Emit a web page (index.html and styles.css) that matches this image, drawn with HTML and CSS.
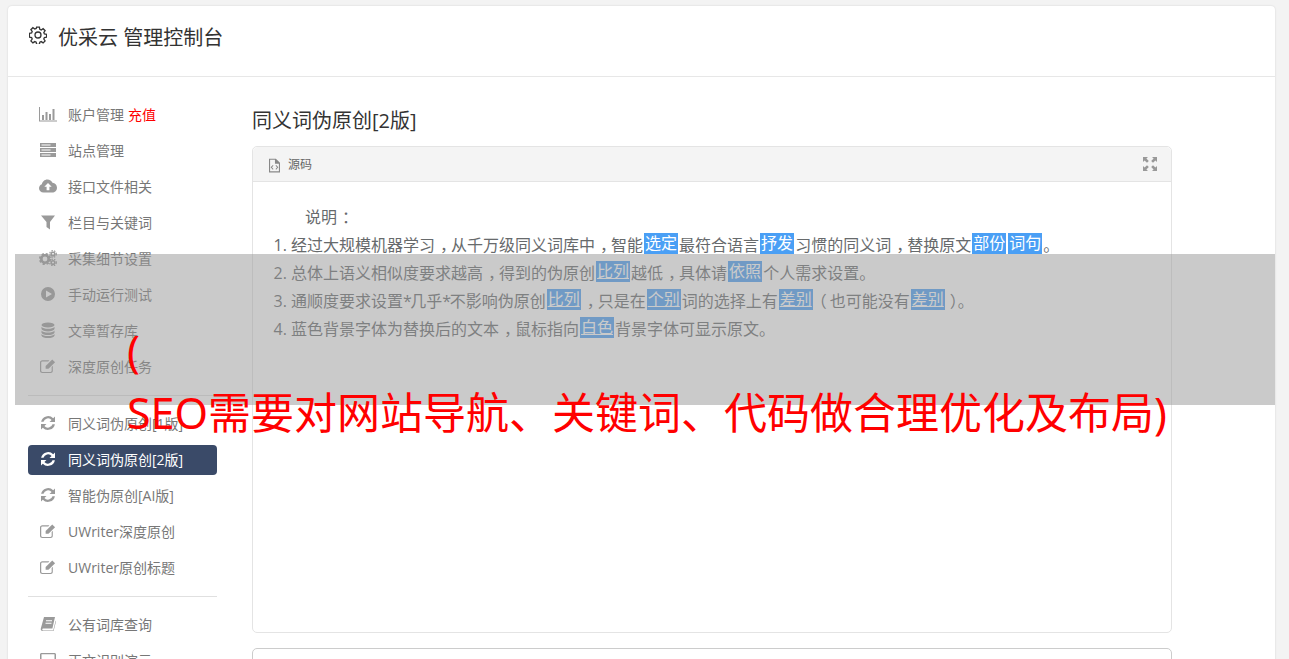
FILE: index.html
```html
<!DOCTYPE html>
<html>
<head>
    <meta charset="utf-8">
    <title>优采云 管理控制台</title>
    <link rel="stylesheet" href="styles.css">
</head>
<body>
    <svg class="icon-defs" width="0" height="0">
        <symbol id="i-chart" viewBox="0 0 18 16"><path d="M0 1h1v13.500h17v1H0z"/><path d="M3 9h2v5H3zM6.500 6h2v8h-2zM10 8h2v6h-2zM13.500 3h2v11h-2z"/></symbol>
        <symbol id="i-server" viewBox="0 0 16 16"><path fill-rule="evenodd" d="M0 1h16v4H0zM0 6h16v4H0zM0 11h16v4H0zM1.500 2.500v1h9v-1zM1.500 7.500v1h9v-1zM1.500 12.500v1h9v-1z"/></symbol>
        <symbol id="i-cloud" viewBox="0 0 18 16"><path fill-rule="evenodd" d="M4.500 14.500C2 14.500 0 12.700 0 10.300 0 8.400 1.200 6.900 2.900 6.300 3.200 3.700 5.500 1.500 8.400 1.500c2.300 0 4.300 1.300 5.100 3.300C16 5 18 7 18 9.700c0 2.700-2.100 4.800-4.800 4.800zM9 5L5.300 8.800h2.300v3.400h2.800V8.800h2.300z"/></symbol>
        <symbol id="i-filter" viewBox="0 0 16 16"><path d="M1 1.500h14L10 8v7.500L6.500 13V8z"/></symbol>
        <symbol id="i-cogs" viewBox="0 0 18 16">
            <circle cx="6" cy="9" r="3.700" fill="none" stroke="currentColor" stroke-width="2.600"/>
            <circle cx="6" cy="9" r="5.200" fill="none" stroke="currentColor" stroke-width="1.800" stroke-dasharray="2.200 1.900"/>
            <circle cx="14" cy="4" r="1.800" fill="none" stroke="currentColor" stroke-width="1.600"/>
            <circle cx="14" cy="4" r="3.300" fill="none" stroke="currentColor" stroke-width="1.200" stroke-dasharray="1.500 1.200"/>
            <circle cx="14" cy="12.500" r="1.800" fill="none" stroke="currentColor" stroke-width="1.600"/>
            <circle cx="14" cy="12.500" r="3.300" fill="none" stroke="currentColor" stroke-width="1.200" stroke-dasharray="1.500 1.200"/>
        </symbol>
        <symbol id="i-play" viewBox="0 0 16 16"><path fill-rule="evenodd" d="M8 1a7 7 0 1 0 0 14A7 7 0 0 0 8 1zM6 4.500l6 3.500-6 3.500z"/></symbol>
        <symbol id="i-database" viewBox="0 0 16 16">
            <ellipse cx="8" cy="3" rx="6.500" ry="2.600"/>
            <path d="M1.500 4.700C2.500 6.200 5 6.800 8 6.800s5.500-.6 6.500-2.100v2.400C14 8.600 11 9.400 8 9.400S2 8.600 1.500 7.100z"/>
            <path d="M1.500 8.400C2.500 9.900 5 10.500 8 10.500s5.500-.6 6.500-2.100v2.400c-.5 1.500-3.500 2.300-6.500 2.300s-6-.8-6.500-2.300z"/>
            <path d="M1.500 12c1 1.500 3.500 2.100 6.500 2.100s5.500-.6 6.500-2.100v1.700C14 15.200 11 16 8 16s-6-.8-6.500-2.300z"/>
        </symbol>
        <symbol id="i-edit" viewBox="0 0 17 16"><path d="M2.500 2H10L8.800 3.200H2.500c-.7 0-1.200.5-1.200 1.200v8.700c0 .7.500 1.200 1.200 1.200h8.700c.7 0 1.200-.5 1.200-1.200V9l1.200-1.200v5.300c0 1.400-1 2.400-2.400 2.400H2.500C1.100 15.500 0 14.500 0 13.100V4.400C0 3 1.100 2 2.500 2z"/><path d="M13 1l3 3-7 7H6V8z"/></symbol>
        <symbol id="i-refresh" viewBox="0 0 16 16"><path d="M15 1.500V7H9.500l2.100-2.100A4.800 4.800 0 0 0 3.500 6.800H1.100A7.100 7.100 0 0 1 13.200 3.300z"/><path d="M1 14.500V9h5.500l-2.100 2.100a4.800 4.800 0 0 0 8.100-1.900h2.400A7.100 7.100 0 0 1 2.800 12.700z"/></symbol>
        <symbol id="i-book" viewBox="0 0 16 16"><path fill-rule="evenodd" d="M4 1h11l-2.600 11.500H3.500c-.8 0-1.200.4-1.200 1s.4 1 1.200 1h9.700L15.700 4.500l.3 1-2.400 9.500H2.500C1.200 15 .5 14 .8 12.500zM6 4.200v1h6v-1zM5.500 6.700v1h6v-1z"/></symbol>
        <symbol id="i-desktop" viewBox="0 0 16 16"><path fill-rule="evenodd" d="M1.500 1h13c.8 0 1.500.7 1.500 1.500v11c0 .8-.7 1.500-1.500 1.500h-13C.7 15 0 14.300 0 13.500v-11C0 1.700.7 1 1.500 1zm0 1.300v11.400h13V2.300z"/></symbol>
        <symbol id="i-file" viewBox="0 0 12 16"><path fill-rule="evenodd" d="M0 .5h7.500L12 5v10.500H0zM1.200 1.700v12.600h9.600V6H6.500V1.700zM4.200 7.500l.7.7-1.700 1.800 1.700 1.800-.7.700L1.800 10zM7.800 7.500l2.400 2.500-2.400 2.500-.7-.7L8.800 10 7.100 8.200z"/></symbol>
        <symbol id="i-expand" viewBox="0 0 14 14"><path d="M0 0h5L3.400 1.600 5.800 4 4 5.800 1.600 3.400 0 5zM14 0v5l-1.600-1.600L10 5.800 8.200 4l2.400-2.400L9 0zM0 14V9l1.600 1.600L4 8.200 5.800 10l-2.400 2.400L5 14zM14 14H9l1.600-1.600L8.200 10 10 8.200l2.400 2.400L14 9z"/></symbol>
    </svg>

    <div class="card">
        <div class="card-head">
            <svg class="head-gear" viewBox="0 0 18 18">
                <path d="M7.600 1.200h2.800l.4 2.200 1.400.6 1.900-1.300 2 2-1.300 1.900.6 1.400 2.200.4v2.800l-2.200.4-.6 1.400 1.300 1.900-2 2-1.900-1.300-1.400.6-.4 2.200H7.600l-.4-2.200-1.400-.6-1.900 1.300-2-2 1.300-1.900-.6-1.400-2.200-.4V7.400l2.200-.4.6-1.400-1.300-1.900 2-2 1.900 1.300 1.400-.6z"/>
                <circle cx="9" cy="9" r="3"/>
            </svg>
            <span>优采云 管理控制台</span>
        </div>
        <div class="card-body">
            <div class="side">
                <a class="side-item"><svg class="ico ico-wide"><use href="#i-chart"/></svg>账户管理<em class="recharge">充值</em></a>
                <a class="side-item"><svg class="ico"><use href="#i-server"/></svg>站点管理</a>
                <a class="side-item"><svg class="ico ico-wide"><use href="#i-cloud"/></svg>接口文件相关</a>
                <a class="side-item"><svg class="ico"><use href="#i-filter"/></svg>栏目与关键词</a>
                <a class="side-item"><svg class="ico ico-wide"><use href="#i-cogs"/></svg>采集细节设置</a>
                <a class="side-item"><svg class="ico"><use href="#i-play"/></svg>手动运行测试</a>
                <a class="side-item"><svg class="ico"><use href="#i-database"/></svg>文章暂存库</a>
                <a class="side-item"><svg class="ico"><use href="#i-edit"/></svg>深度原创任务</a>
                <div class="side-line"></div>
                <a class="side-item"><svg class="ico"><use href="#i-refresh"/></svg>同义词伪原创[1版]</a>
                <a class="side-item active"><svg class="ico"><use href="#i-refresh"/></svg>同义词伪原创[2版]</a>
                <a class="side-item"><svg class="ico"><use href="#i-refresh"/></svg>智能伪原创[AI版]</a>
                <a class="side-item"><svg class="ico"><use href="#i-edit"/></svg>UWriter深度原创</a>
                <a class="side-item"><svg class="ico"><use href="#i-edit"/></svg>UWriter原创标题</a>
                <div class="side-line"></div>
                <a class="side-item"><svg class="ico"><use href="#i-book"/></svg>公有词库查询</a>
                <a class="side-item"><svg class="ico"><use href="#i-desktop"/></svg>正文识别演示</a>
            </div>
            <div class="main">
                <h2>同义词伪原创[2版]</h2>
                <div class="panel">
                    <div class="panel-head">
                        <svg class="file-ico"><use href="#i-file"/></svg>
                        <span class="panel-name">源码</span>
                        <svg class="expand-ico"><use href="#i-expand"/></svg>
                    </div>
                    <div class="panel-body">
                        <p class="intro">说明<span class="mid">：</span></p>
                        <ol>
                            <li>经过大规模机器学习<span class="mid">，</span>从千万级同义词库中<span class="mid">，</span>智能<span class="hl">选定</span>最符合语言<span class="hl">抒发</span>习惯的同义词<span class="mid">，</span>替换原文<span class="hl">部份</span><span class="hl">词句</span>。</li>
                            <li>总体上语义相似度要求越高<span class="mid">，</span>得到的伪原创<span class="hl line">比列</span>越低<span class="mid">，</span>具体请<span class="hl">依照</span>个人需求设置。</li>
                            <li>通顺度要求设置<span class="star">*</span>几乎<span class="star">*</span>不影响伪原创<span class="hl line">比列</span><span class="mid">，</span>只是在<span class="hl line">个别</span>词的选择上有<span class="hl line">差别</span><span class="open">（</span>也可能没有<span class="hl line">差别</span><span class="close">）</span>。</li>
                            <li>蓝色背景字体为替换后的文本<span class="mid">，</span>鼠标指向<span class="hl line">白色</span>背景字体可显示原文。</li>
                        </ol>
                    </div>
                </div>
                <div class="panel panel-next"></div>
            </div>
        </div>
    </div>

    <div class="ad">
        <div class="ad-text">(<br>SEO需要对网站导航、关键词、代码做合理优化及布局)</div>
    </div>
</body>
</html>
```

FILE: styles.css
```css
html, body {
    height: 100%;
    overflow: hidden;
}

body {
    margin: 0;
    padding: 6px 14px 0 8px;
    box-sizing: border-box;
    background-color: #f3f3f3;
    font-family: "Open Sans", "Noto Sans CJK SC", sans-serif;
    font-size: 14px;
    color: #676a6c;
}

.icon-defs {
    position: absolute;
}

.card {
    background-color: #fff;
    border-radius: 4px 4px 0 0;
    box-shadow: 0 0 2px rgba(0,0,0,0.15);
    height: 800px;
}

.card-head {
    display: flex;
    align-items: center;
    height: 60px;
    padding: 0 0 10px 21px;
    border-bottom: 1px solid #e7e7e7;
    font-size: 20px;
    color: #333;
}

.head-gear {
    width: 18px;
    height: 18px;
    margin-right: 11px;
    margin-top: -2px;
    fill: none;
    stroke: #333;
    stroke-width: 1.3;
}

.card-body {
    display: flex;
}

.side {
    width: 189px;
    margin-left: 20px;
    padding-top: 23px;
}

.side-item {
    display: flex;
    align-items: center;
    height: 28px;
    margin-bottom: 6px;
    padding: 0 0 2px 12px;
    border-radius: 4px;
    color: #777;
}

.side-item.active {
    background-color: #3a4a68;
    color: #fff;
}

.ico {
    width: 16px;
    height: 16px;
    margin-right: 12px;
    fill: #9a9a9a;
    color: #9a9a9a;
    flex: none;
}

.ico-wide {
    width: 18px;
    margin-left: -1px;
    margin-right: 11px;
}

.active .ico {
    fill: #fff;
    color: #fff;
}

.recharge {
    margin-left: 4px;
    font-style: normal;
    font-size: 14px;
    color: #f00;
}

.side-line {
    height: 1px;
    margin: 13px 0;
    background-color: #e0e0e0;
}

.main {
    width: 920px;
    margin-left: 35px;
    padding-top: 30px;
}

h2 {
    margin: 0 0 11px;
    font-size: 20px;
    font-weight: normal;
    line-height: 28px;
    color: #333;
}

.panel {
    height: 485px;
    border: 1px solid #e4e4e4;
    border-radius: 5px;
}

.panel-next {
    margin-top: 15px;
    border-color: #ccc;
}

.panel-head {
    display: flex;
    align-items: center;
    height: 34px;
    padding: 0 14px 0 16px;
    background-color: #f4f4f4;
    border-bottom: 1px solid #e4e4e4;
    border-radius: 5px 5px 0 0;
}

.file-ico {
    width: 11px;
    height: 15px;
    margin-right: 8px;
    margin-top: 2px;
    fill: #888;
}

.panel-name {
    font-size: 12px;
    color: #666;
}

.expand-ico {
    width: 14px;
    height: 14px;
    margin-left: auto;
    fill: #999;
}

.panel-body {
    padding-top: 21px;
    font-size: 16px;
    line-height: 28px;
    color: #676a6c;
}

.intro {
    margin: 0;
    padding-left: 52px;
}

ol {
    margin: 0;
    padding-left: 38px;
}

.hl {
    display: inline-block;
    height: 21px;
    line-height: 21px;
    margin: 0 1px;
    padding: 0 1px;
    background-color: #4a9ff5;
    color: #fff;
    vertical-align: 2px;
}

.hl.line {
    text-decoration: underline;
}

/* full-width punctuation sits in the middle of its box in the original */
.mid {
    padding-left: 5px;
    margin-right: -5px;
}

.open {
    margin-left: -3px;
    margin-right: 3px;
}

.close {
    margin-left: 4px;
}

.star {
    letter-spacing: -1.5px;
}

.ad {
    position: absolute;
    left: 15px;
    top: 254px;
    width: 1260px;
    height: 151px;
    background-color: rgba(150,150,150,0.5);
}

.ad-text {
    margin: 66px 0 0 112px;
    font-family: "Noto Sans", "Noto Sans CJK SC", sans-serif;
    font-size: 43px;
    line-height: 62px;
    white-space: nowrap;
    color: #f00;
}
```
